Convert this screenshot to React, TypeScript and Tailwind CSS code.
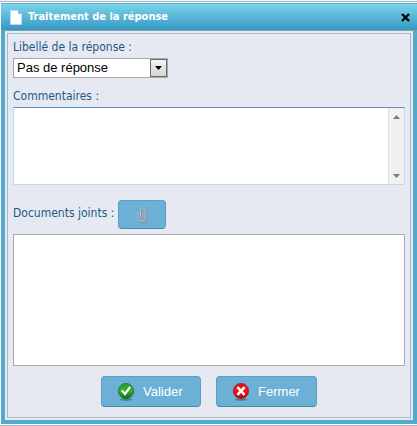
import React, { useState } from 'react';

const PageIcon = () => (
  <svg width="12" height="15" viewBox="0 0 12 15" aria-hidden="true">
    <path d="M0.5 0.5H8.5L11.5 3.5V14.5H0.5Z" fill="#fbfdff" stroke="#bcd9f7" />
    <path d="M8.5 0.5V3.5H11.5Z" fill="#6fa3dc" stroke="#8db9e8" strokeWidth="0.8" />
  </svg>
);

const CloseIcon = () => (
  <svg width="9" height="9" viewBox="0 0 9 9" aria-hidden="true">
    <path d="M1 1L8 8M8 1L1 8" stroke="#000000" strokeWidth="2.4" />
  </svg>
);

const ClipIcon = () => (
  <svg width="10" height="16" viewBox="0 0 10 16" fill="none" aria-hidden="true">
    <path
      d="M1.3 5V11.5Q1.3 14.8 4.5 14.8H5.5Q8.7 14.8 8.7 11.5V4Q8.7 1.2 6.2 1.2Q3.8 1.2 3.8 4V9.5Q3.8 11 5 11Q6.2 11 6.2 9.5V4.5"
      stroke="#7f8896"
      strokeWidth="1.7"
    />
    <path
      d="M1 5V11.5Q1 14.4 4.2 14.4H5.2Q8.3 14.4 8.3 11.5V4Q8.3 0.9 6 0.9Q3.5 0.9 3.5 4V9.5Q3.5 10.7 4.8 10.7Q5.9 10.7 5.9 9.5V4.5"
      stroke="#bfc1cd"
      strokeWidth="1"
    />
  </svg>
);

const CheckIcon = () => (
  <svg width="16" height="18" viewBox="0 0 16 18" aria-hidden="true">
    <defs>
      <linearGradient id="okFill" x1="0" y1="0" x2="0" y2="1">
        <stop offset="0" stopColor="#2f9d2b" />
        <stop offset="0.5" stopColor="#35ae2b" />
        <stop offset="1" stopColor="#0c6d0c" />
      </linearGradient>
    </defs>
    <ellipse cx="8" cy="16.5" rx="6" ry="1.3" fill="#35698a" opacity="0.7" />
    <circle cx="8" cy="8" r="7.6" fill="url(#okFill)" stroke="#177a18" strokeWidth="0.8" />
    <path d="M3.8 7.4L6.9 11L12.2 4" fill="none" stroke="#ffffff" strokeWidth="2.2" />
  </svg>
);

const CrossIcon = () => (
  <svg width="16" height="18" viewBox="0 0 16 18" aria-hidden="true">
    <defs>
      <linearGradient id="koFill" x1="0" y1="0" x2="0" y2="1">
        <stop offset="0" stopColor="#d81414" />
        <stop offset="0.5" stopColor="#f51212" />
        <stop offset="1" stopColor="#b00808" />
      </linearGradient>
    </defs>
    <ellipse cx="8" cy="16.5" rx="6" ry="1.3" fill="#35698a" opacity="0.7" />
    <circle cx="8" cy="8" r="7.6" fill="url(#koFill)" stroke="#c00d0d" strokeWidth="0.8" />
    <path d="M4.4 4.1L11.6 11.9M11.6 4.1L4.4 11.9" stroke="#ffffff" strokeWidth="2.6" />
  </svg>
);

interface ActionButtonProps {
  icon: React.ReactNode;
  label: string;
}

const ActionButton: React.FC<ActionButtonProps> = ({ icon, label }) => (
  <button
    type="button"
    className="flex h-[31px] min-w-[100px] items-center gap-[9px] rounded-[4px] border border-[#5c9fc4] border-b-[#4b86a8] bg-[#6cb0d7] px-4 font-['Liberation_Sans',Arial,sans-serif] text-[13px] text-white"
  >
    {icon}
    <span>{label}</span>
  </button>
);

const App: React.FC = () => {
  const [answer, setAnswer] = useState('Pas de réponse');
  const [comment, setComment] = useState('');

  return (
    <div className="flex min-h-screen flex-col border-b border-[#a3b7c9] bg-white pb-px font-['DejaVu_Sans_Condensed','DejaVu_Sans',sans-serif] text-[12px] leading-4 text-[#1c5a85]">
      <div className="mb-px h-[2px] border-b border-[#a9b8c6] bg-[#f4f4f4]" />

      <div className="ml-px flex grow flex-col">
        {/* Title bar */}
        <header className="flex h-7 items-center justify-between border-t border-b border-t-[#58afcb] border-b-[#7f9fac] bg-linear-to-b from-[#7ad5e9] to-[#3498c4] pr-[7px] pl-[9px]">
          <div className="flex items-center gap-[6px]">
            <PageIcon />
            <h1 className="text-[11px] font-bold text-white">Traitement de la réponse</h1>
          </div>
          <button type="button" aria-label="Fermer la fenêtre">
            <CloseIcon />
          </button>
        </header>

        <div className="flex grow flex-col border-4 border-t-0 border-[#53aacd] bg-[#e6eaed]">
          <form className="m-[2px] grow border border-[#a6b9cb] bg-[#e6e9f2] px-[5px] pt-[5px]">
            <label htmlFor="answer" className="block">Libellé de la réponse :</label>
            <div className="relative mt-[3px] h-5 w-[155px]">
              <select
                id="answer"
                value={answer}
                onChange={(e) => setAnswer(e.target.value)}
                className="block h-5 w-full appearance-none border border-[#a4a7ad] bg-white pl-[3px] font-['Liberation_Sans',Arial,sans-serif] text-[13px] leading-4 text-black"
              >
                <option>Pas de réponse</option>
              </select>
              <span className="pointer-events-none absolute top-px right-px flex h-[18px] w-[17px] items-center justify-center border border-[#6b6b6b] bg-linear-to-b from-[#f4f4f4] to-[#d4d4d4]">
                <svg width="7" height="4" viewBox="0 0 7 4" aria-hidden="true">
                  <path d="M0 0H7L3.5 4Z" fill="#000000" />
                </svg>
              </span>
            </div>

            <label htmlFor="comment" className="mt-[10px] block">Commentaires :</label>
            <div className="mt-[3px] flex h-[78px] rounded-[1px] border border-[#c0dcec] border-t-[#5794bf] bg-white">
              <textarea
                id="comment"
                value={comment}
                onChange={(e) => setComment(e.target.value)}
                className="min-w-0 grow resize-none px-1 text-black outline-none"
              />
              <div aria-hidden="true" className="flex w-4 flex-col items-center justify-between border-l border-[#e2e2e2] bg-[#f0f0f0] pt-[7px] pb-[6px]">
                <svg width="7" height="4" viewBox="0 0 7 4">
                  <path d="M0 4H7L3.5 0Z" fill="#7c7c7c" />
                </svg>
                <svg width="7" height="4" viewBox="0 0 7 4">
                  <path d="M0 0H7L3.5 4Z" fill="#7c7c7c" />
                </svg>
              </div>
            </div>

            <div className="mt-[15px] flex h-[29px] items-center gap-1">
              <label htmlFor="attach" className="pb-1">Documents joints :</label>
              <button
                id="attach"
                type="button"
                className="flex h-full w-12 items-center justify-center rounded-[4px] border border-[#5c9fc4] border-b-[#4b86a8] bg-[#6cb0d7]"
              >
                <ClipIcon />
              </button>
            </div>

            <div className="mt-[5px] h-[132px] border border-[#a9acb2] bg-white" />

            <div className="my-[10px] flex justify-center gap-[15px]">
              <ActionButton icon={<CheckIcon />} label="Valider" />
              <ActionButton icon={<CrossIcon />} label="Fermer" />
            </div>
          </form>
        </div>
      </div>
    </div>
  );
};

export default App;
